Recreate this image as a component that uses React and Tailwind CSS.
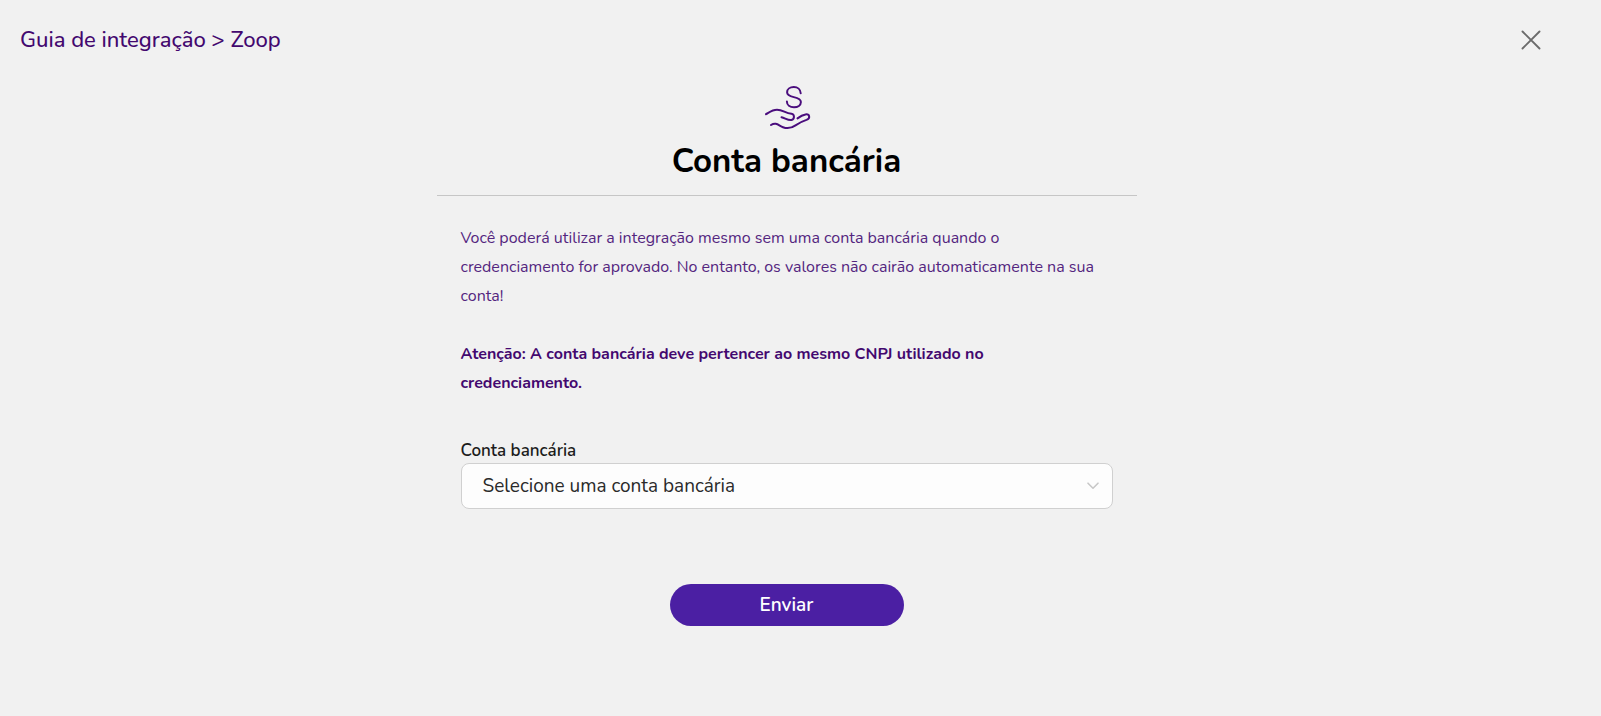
import React, { useState } from 'react';

const HandCoinIcon = () => (
    <svg
        viewBox="-1 0 48 46"
        className="w-12 h-[46px]"
        fill="none"
        stroke="#4a0d7d"
        strokeWidth="2"
        strokeLinecap="round"
        strokeLinejoin="round"
        aria-hidden="true"
    >
        {/* Money sign */}
        <path d="M36.7 8.2C36.5 4.4 33.6 2 29.8 2C26 2 23.1 4.2 23.1 7.2C23.1 10.4 26.4 11.3 29.8 12.1C33.4 12.9 36.9 13.8 36.9 17.1C36.9 20.2 33.8 22.3 30 22.3C26 22.3 22.9 20 22.9 16.6" />
        {/* Upper fingers */}
        <path d="M2 29.2C5.5 27.2 8.5 24.8 13 24.8C19 24.8 21 28.2 27.5 28.8C30.6 29.2 31 34.4 27.4 35C24 35.5 21 33 17.5 32.2" />
        {/* Palm */}
        <path d="M7 40C12 36.8 14.5 40.4 19 42.2C23.5 44 28 42.8 31.5 40.4C35 38 38.5 36.2 42.5 34.9C46.6 33.4 45.8 28.8 41.5 29.4C38.5 29.8 36.5 31 33.5 33.4" />
    </svg>
);

const CloseIcon = () => (
    <svg viewBox="0 0 20 20" className="w-5 h-5" fill="none" stroke="#6b6b6b" strokeWidth="1.9" strokeLinecap="round" aria-hidden="true">
        <path d="M1.5 1.5L18.5 18.5M18.5 1.5L1.5 18.5" />
    </svg>
);

const ChevronIcon = () => (
    <svg
        viewBox="0 0 12 8"
        className="absolute right-3.5 top-1/2 -translate-y-1/2 w-3 h-2 pointer-events-none"
        fill="none"
        stroke="#c8c8c8"
        strokeWidth="1.6"
        strokeLinecap="round"
        strokeLinejoin="round"
        aria-hidden="true"
    >
        <path d="M1 1.2L6 6.2L11 1.2" />
    </svg>
);

export default function App() {
    const [account, setAccount] = useState('');

    return (
        <div className="min-h-screen bg-[#f1f1f1] pr-7 font-['Nunito','Open_Sans',sans-serif]">
            <header className="flex items-center justify-between h-20 pl-5 pr-8">
                <h1 className="text-[22px] leading-7 font-medium text-[#43086f]">Guia de integração &gt; Zoop</h1>
                <button type="button" aria-label="Fechar" className="cursor-pointer">
                    <CloseIcon />
                </button>
            </header>

            <main className="mx-auto w-full max-w-[700px]">
                <div className="flex flex-col items-center pt-[5px] pb-2 border-b border-[#c6c6c6]">
                    <HandCoinIcon />
                    <h2 className="pt-1.5 text-[33px] leading-[50px] font-bold text-black">Conta bancária</h2>
                </div>

                <form className="px-6 pt-7" onSubmit={(e) => e.preventDefault()}>
                    <p className="pr-3 text-base leading-[29px] text-[#54267f]">
                        Você poderá utilizar a integração mesmo sem uma conta bancária quando o credenciamento for
                        aprovado. No entanto, os valores não cairão automaticamente na sua conta!
                    </p>
                    <p className="pt-[29px] pr-3 text-base leading-[29px] font-bold text-[#43086f]">
                        Atenção: A conta bancária deve pertencer ao mesmo CNPJ utilizado no{' '}
                        <br />
                        credenciamento.
                    </p>

                    <label htmlFor="account" className="block pt-10 text-[17px] leading-[25px] font-semibold text-[#1c1c1c]">
                        Conta bancária
                    </label>
                    <div className="relative">
                        <select
                            id="account"
                            value={account}
                            onChange={(e) => setAccount(e.target.value)}
                            className="w-full h-[46px] appearance-none rounded-lg border border-[#d0d0d0] bg-[#fdfdfd] pl-[21px] pr-10 text-[19px] text-[#2a2a2a]"
                        >
                            <option value="">Selecione uma conta bancária</option>
                        </select>
                        <ChevronIcon />
                    </div>

                    <button
                        type="submit"
                        className="block mx-auto mt-[75px] w-[234px] h-[42px] rounded-full bg-[#4b1fa3] text-[19px] font-semibold text-white cursor-pointer"
                    >
                        Enviar
                    </button>
                </form>
            </main>
        </div>
    );
}
